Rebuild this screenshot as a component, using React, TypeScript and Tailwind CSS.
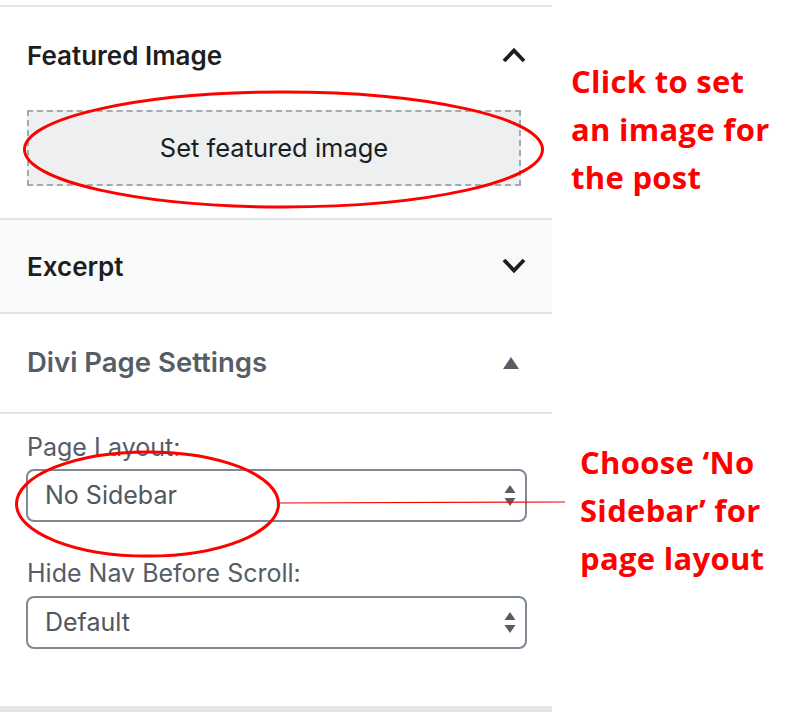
import React from "react";

/**
 * Post sidebar: Featured Image / Excerpt / Divi Page Settings,
 * with red hand-drawn style annotations on top.
 */

const ui = { fontFamily: "Inter, 'Noto Sans', sans-serif" };
const note = { fontFamily: "'Open Sans', 'Noto Sans', sans-serif" };

function Chevron({ dir }: { dir: "up" | "down" }) {
  return (
    <svg width="26" height="16" viewBox="0 0 26 16" className="text-[#1e1e1e]">
      <polyline
        points={dir === "up" ? "3,14 13,3.5 23,14" : "3,2 13,12.5 23,2"}
        fill="none"
        stroke="currentColor"
        strokeWidth="3.8"
        strokeLinecap="butt"
        strokeLinejoin="miter"
      />
    </svg>
  );
}

function SelectArrows() {
  return (
    <svg width="12" height="22" viewBox="0 0 12 22" className="text-[#555d66]">
      <path d="M6 0 L11.5 8 H0.5 Z" fill="currentColor" />
      <path d="M6 21 L11.5 13 H0.5 Z" fill="currentColor" />
    </svg>
  );
}

function FakeSelect({ value }: { value: string }) {
  return (
    <div className="flex h-[53px] w-[501px] items-center justify-between rounded-[8px] border-2 border-[#7e8993] bg-white pl-[17px] pr-[9px]">
      <span className="text-[25px] text-[#50575e]">{value}</span>
      <SelectArrows />
    </div>
  );
}

function Panel() {
  return (
    <div className="w-[552px] shrink-0 pt-[5px]" style={ui}>
      {/* Featured image */}
      <section className="border-t-2 border-[#e2e4e7] px-[27px] pb-[32px]">
        <div className="flex h-[96px] items-center justify-between">
          <h2 className="text-[26px] font-semibold text-[#1e1e1e]">Featured Image</h2>
          <div className="mr-[-2px]">
            <Chevron dir="up" />
          </div>
        </div>
        <div className="mt-[7px] flex h-[76px] w-[494px] items-center justify-center border-2 border-dashed border-[#a2aab2] bg-[#edeff0]">
          <span className="text-[25.5px] text-[#191e23]">Set featured image</span>
        </div>
      </section>

      {/* Excerpt */}
      <section className="flex h-[96px] items-center justify-between border-y-2 border-[#e2e4e7] bg-[#f8f9f9] px-[27px]">
        <h2 className="text-[26px] font-semibold text-[#1e1e1e]">Excerpt</h2>
        <div className="mr-[-2px]">
          <Chevron dir="down" />
        </div>
      </section>

      {/* Divi page settings */}
      <section className="flex h-[98px] items-center justify-between px-[27px]">
        <h2 className="text-[27.5px] font-semibold text-[#555d66]">Divi Page Settings</h2>
        <svg width="16" height="12" viewBox="0 0 16 12" className="mr-[6px] text-[#555d66]">
          <path d="M8 0 L16 12 H0 Z" fill="currentColor" />
        </svg>
      </section>

      <section className="border-t-2 border-[#e2e4e7] px-[26px] pb-[57px]">
        <label className="block pt-[17px] pl-[1px] text-[25px] leading-[32px] text-[#555d66]">
          Page Layout:
        </label>
        <div className="mt-[6px]">
          <FakeSelect value="No Sidebar" />
        </div>
        <label className="mt-[35px] block pl-[1px] text-[25px] leading-[32px] text-[#555d66]">
          Hide Nav Before Scroll:
        </label>
        <div className="mt-[7px]">
          <FakeSelect value="Default" />
        </div>
      </section>
      <div className="h-[6px] bg-[#e4e5e7]" />
    </div>
  );
}

export default function App() {
  return (
    <div className="relative h-[712px] w-[800px] overflow-hidden bg-white">
      <div className="flex">
        <Panel />
        <div className="pl-[19px] pt-[57px] text-[31px] font-bold leading-[48px] tracking-[0.3px] text-[#ff0000]" style={note}>
          <p>
            Click to set
            <br />
            an image for
            <br />
            the post
          </p>
          <p className="ml-[9px] mt-[237px]">
            Choose ‘No
            <br />
            Sidebar’ for
            <br />
            page layout
          </p>
        </div>
      </div>

      {/* annotation strokes drawn over the panel */}
      <svg className="pointer-events-none absolute left-0 top-0" width="800" height="712" viewBox="0 0 800 712">
        <ellipse cx="283.5" cy="149.5" rx="259" ry="57.5" fill="none" stroke="#ff0000" strokeWidth="3" />
        <ellipse cx="147.5" cy="504" rx="131" ry="52" fill="none" stroke="#ff0000" strokeWidth="3" />
        <line x1="280" y1="503" x2="565" y2="502" stroke="#ff0000" strokeWidth="1.2" />
      </svg>
    </div>
  );
}
